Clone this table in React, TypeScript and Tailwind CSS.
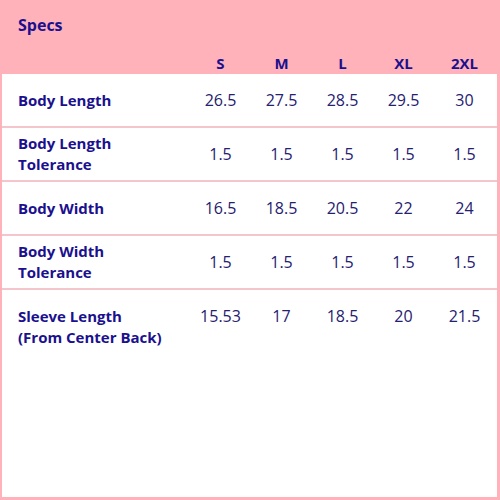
import React from 'react';

const sizes = ['S', 'M', 'L', 'XL', '2XL'];

const rows: { label: React.ReactNode; values: string[] }[] = [
  { label: 'Body Length', values: ['26.5', '27.5', '28.5', '29.5', '30'] },
  { label: <>Body Length<br />Tolerance</>, values: ['1.5', '1.5', '1.5', '1.5', '1.5'] },
  { label: 'Body Width', values: ['16.5', '18.5', '20.5', '22', '24'] },
  { label: <>Body Width<br />Tolerance</>, values: ['1.5', '1.5', '1.5', '1.5', '1.5'] },
  { label: <>Sleeve Length<br />(From Center Back)</>, values: ['15.53', '17', '18.5', '20', '21.5'] },
];

const SpecRow = ({ label, values, last }: { label: React.ReactNode; values: string[]; last?: boolean; key?: React.Key }) => (
  <div
    className={`grid grid-cols-[188px_repeat(5,61px)] ${last ? 'items-start pt-[16px]' : 'h-[54px] items-center border-b-2 border-[#f4c6cb]'}`}
  >
    <div className="pl-4 text-[15px] font-bold leading-[21px] text-[#1b108e]">{label}</div>
    {values.map((v, i) => (
      <div key={i} className="text-center text-[16px] leading-[21px] text-[#262070]">
        {v}
      </div>
    ))}
  </div>
);

export default function App() {
  return (
    <div
      className="w-[500px] h-[500px] bg-[#ffb2ba] pl-[2px] pr-[3px] pb-[3px] flex flex-col"
      style={{ fontFamily: '"Open Sans", "Liberation Sans", sans-serif' }}
    >
      <div className="h-[74px] flex flex-col">
        <div className="pl-4 pt-[15px] text-[16px] font-bold leading-[21px] text-[#1b108e]">Specs</div>
        <div className="grid grid-cols-[188px_repeat(5,61px)] mt-[17px]">
          <div />
          {sizes.map(s => (
            <div key={s} className="text-center text-[15px] font-bold leading-[21px] text-[#1b108e]">
              {s}
            </div>
          ))}
        </div>
      </div>
      <div className="flex-1 bg-white">
        {rows.map((r, i) => (
          <SpecRow key={i} label={r.label} values={r.values} last={i === rows.length - 1} />
        ))}
      </div>
    </div>
  );
}
